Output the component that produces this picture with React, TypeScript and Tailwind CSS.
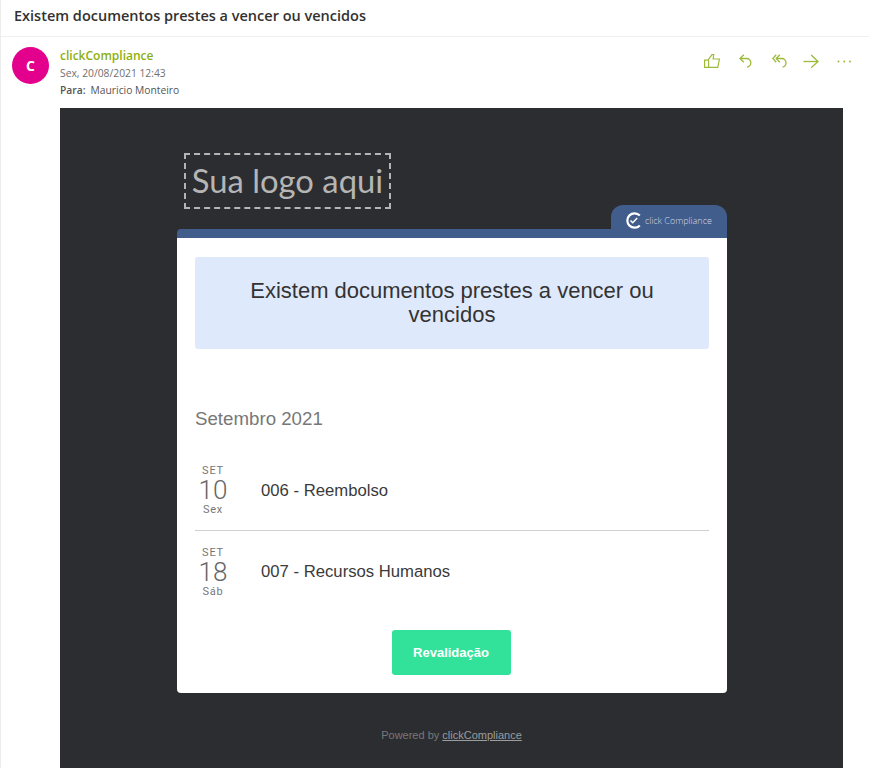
const events = [
  { month: "SET", day: "10", weekday: "Sex", title: "006 - Reembolso" },
  { month: "SET", day: "18", weekday: "Sáb", title: "007 - Recursos Humanos" },
];

function ThumbIcon() {
  return (
    <svg width="16" height="14" viewBox="0 0 16 14" fill="none" stroke="currentColor" strokeWidth="1.2">
      <path d="M.6 6.2H4L8 .7h1.7L9.2 5h6.2l-1.6 8.3H.6z" />
      <path d="M4.6 6.2v7" />
    </svg>
  );
}

function ReplyIcon() {
  return (
    <svg width="13" height="14" viewBox="0 0 13 14" fill="none" stroke="currentColor" strokeWidth="1.3">
      <path d="M4.8.8 1 4.5l3.8 3.8" />
      <path d="M1 4.5h6.5a4.3 4.3 0 0 1 4.3 4.3c0 2.3-1.5 3.9-3.8 4.4" />
    </svg>
  );
}

function ReplyAllIcon() {
  return (
    <svg width="15" height="14" viewBox="0 0 15 14" fill="none" stroke="currentColor" strokeWidth="1.3">
      <path d="M4.2.8.8 4.5l3.4 3.8" />
      <path d="M7.8.8 4.2 4.5l3.6 3.8" />
      <path d="M4.2 4.5H9.7a4.3 4.3 0 0 1 4.3 4.3c0 2.3-1.3 3.9-3.4 4.4" />
    </svg>
  );
}

function ForwardIcon() {
  return (
    <svg width="16" height="14" viewBox="0 0 16 14" fill="none" stroke="currentColor" strokeWidth="1.3">
      <path d="M.5 7.5h14.5" />
      <path d="M8.2 1l6.8 6.5-6.8 6.2" />
    </svg>
  );
}

function DotsIcon() {
  return (
    <svg width="14" height="14" viewBox="0 0 14 14" fill="currentColor">
      <circle cx="1.5" cy="7.5" r="1" />
      <circle cx="7.3" cy="7.5" r="1" />
      <circle cx="13" cy="7.5" r="1" />
    </svg>
  );
}

function BrandMark() {
  return (
    <svg width="17" height="17" viewBox="0 0 17 17" fill="none" stroke="#fff" className="shrink-0">
      <path d="M14.8 3.6A7.2 7.2 0 1 0 14.8 13.4" strokeWidth="2.2" />
      <path d="M5.5 8.5l2.2 2.2L12.2 6" strokeWidth="1.6" />
    </svg>
  );
}

function EventRow({ event }: { event: (typeof events)[number] }) {
  return (
    <div className="flex items-center h-[72px] pt-[2px]">
      <div className="w-[36px] flex flex-col items-center font-['Roboto',sans-serif] text-[#777]">
        <span className="text-[11px] leading-[12px] tracking-[0.8px]">{event.month}</span>
        <span className="text-[26px] leading-[26px] font-light text-[#666]">{event.day}</span>
        <span className="text-[11px] leading-[13px] tracking-[0.8px]">{event.weekday}</span>
      </div>
      <div className="ml-[30px] text-[16.7px] text-[#3a3a3a] font-['Liberation_Sans',sans-serif]">{event.title}</div>
    </div>
  );
}

export default function App() {
  return (
    <div className="h-[768px] overflow-hidden bg-white border-l border-[#ececec] font-['Open_Sans',sans-serif]">
      <div className="h-[37px] flex items-center pb-[5px] pl-[13px] border-b border-[#efefef] text-[14.5px] font-semibold text-[#323130]">
        Existem documentos prestes a vencer ou vencidos
      </div>

      <div className="flex h-[71px]">
        <div className="ml-[11px] mt-[10px] size-[37px] rounded-full bg-[#e3008c] flex items-center justify-center text-white text-[14px] font-bold">
          C
        </div>
        <div className="ml-[11px] mt-[10px] flex-1">
          <div className="text-[12px] leading-[17px] font-semibold text-[#8cb00f]">clickCompliance</div>
          <div className="text-[10.3px] leading-[18px] text-[#707070]">Sex, 20/08/2021 12:43</div>
          <div className="text-[10.3px] leading-[17px] text-[#555]">
            <span className="font-semibold">Para:</span>
            <span className="ml-[5px]">Mauricio Monteiro</span>
          </div>
        </div>
        <div className="flex items-start mt-[17px] mr-[18px] text-[#9dbb3a]">
          <ThumbIcon />
          <div className="ml-[19px]">
            <ReplyIcon />
          </div>
          <div className="ml-[20px]">
            <ReplyAllIcon />
          </div>
          <div className="ml-[16px]">
            <ForwardIcon />
          </div>
          <div className="ml-[18px]">
            <DotsIcon />
          </div>
        </div>
      </div>

      <div className="ml-[59px] w-[783px] h-[660px] bg-[#2c2d30] flex flex-col items-center">
        <div className="w-[550px] ml-px h-[121px] flex justify-between items-end">
          <div className="self-start mt-[45px] ml-[7px] w-[207px] h-[56px] border-2 border-dashed border-[#b5b5b5] flex items-center justify-center text-[32.8px] text-[#b5b5b5] font-['Lato',sans-serif]">
            Sua logo aqui
          </div>
          <div className="w-[116px] h-[24px] rounded-t-[12px] bg-[#405d8c] flex items-center gap-[3px] pl-[14px] pt-[7px] text-[9px] text-[#d5dce8]">
            <BrandMark />
            <span className="whitespace-nowrap font-light">click Compliance</span>
          </div>
        </div>

        <div className="w-[550px] ml-px h-[464px] bg-white rounded-b-[4px] rounded-tl-[4px] border-t-[9px] border-[#405d8c] px-[18px] pt-[19px]">
          <div className="h-[92px] rounded-[3px] bg-[#dfe9fc] flex items-center justify-center text-center px-[40px] text-[22px] leading-[24px] text-[#333] font-['Liberation_Sans',sans-serif]">
            Existem documentos prestes a vencer ou vencidos
          </div>
          <div className="mt-[57px] text-[18.7px] leading-[26px] text-[#777] font-['Liberation_Sans',sans-serif]">Setembro 2021</div>
          <div className="mt-[17px] [&>*+*]:border-t [&>*+*]:border-[#d0d0d0] flex flex-col">
            {events.map((event) => (
              <div key={event.day} className="h-[81px] flex items-center">
                <EventRow event={event} />
              </div>
            ))}
          </div>
          <div className="mt-[19px] flex justify-center">
            <button className="w-[119px] h-[45px] mr-[2px] rounded-[3px] bg-[#33e29a] text-white text-[13px] font-bold font-['Liberation_Sans',sans-serif]">
              Revalidação
            </button>
          </div>
        </div>

        <div className="mt-[35px] text-[11px] leading-[14px] text-[#77787b] font-['Liberation_Sans',sans-serif]">
          Powered by <span className="underline text-[#9b9c9e]">clickCompliance</span>
        </div>
      </div>
    </div>
  );
}
